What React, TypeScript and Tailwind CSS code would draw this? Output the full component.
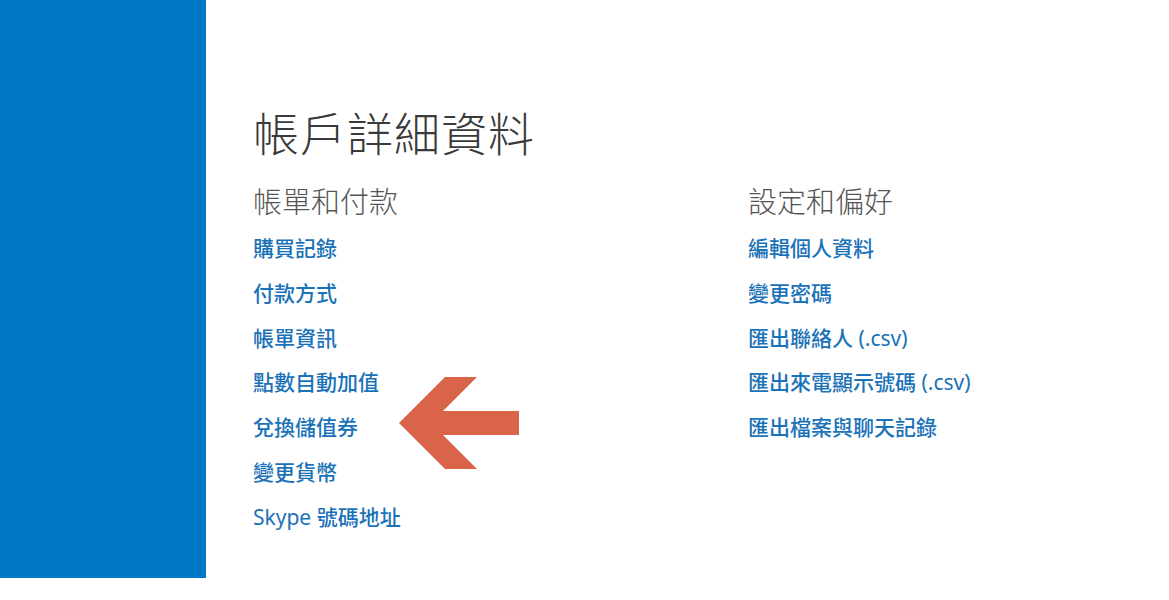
import React from "react";

type Item = { cjk: string; latinBefore?: string; latinAfter?: string };

const left: Item[] = [
  { cjk: "購買記錄" },
  { cjk: "付款方式" },
  { cjk: "帳單資訊" },
  { cjk: "點數自動加值" },
  { cjk: "兌換儲值券" },
  { cjk: "變更貨幣" },
  { latinBefore: "Skype ", cjk: "號碼地址" },
];
const right: Item[] = [
  { cjk: "編輯個人資料" },
  { cjk: "變更密碼" },
  { cjk: "匯出聯絡人", latinAfter: " (.csv)" },
  { cjk: "匯出來電顯示號碼", latinAfter: " (.csv)" },
  { cjk: "匯出檔案與聊天記錄" },
];

const font = { fontFamily: '"Noto Sans", "Noto Sans CJK TC", sans-serif' };

function LinkList({ items }: { items: Item[] }) {
  return (
    <ul className="mt-[4px] flex flex-col">
      {items.map((t) => (
        <li key={t.cjk} className="text-[21px] leading-[44.8px] font-medium text-[#1a72b8]">
          {t.latinBefore && <span className="font-normal">{t.latinBefore}</span>}
          {t.cjk}
          {t.latinAfter && <span className="font-normal">{t.latinAfter}</span>}
        </li>
      ))}
    </ul>
  );
}

export default function App() {
  return (
    <div className="flex w-[1169px] h-[600px] bg-white overflow-hidden" style={font}>
      <aside className="w-[206px] h-[578px] shrink-0 bg-[#0078c8]" />
      <main className="relative flex-1 pl-[47px] pt-[105px]">
        <h1 className="text-[46px] leading-[56px] font-light text-[#3a3a3a] tracking-[1px]">帳戶詳細資料</h1>
        <div className="mt-[21px] grid grid-cols-[495px_1fr]">
          <section>
            <h2 className="text-[29px] leading-[40px] font-light text-[#555555]">帳單和付款</h2>
            <LinkList items={left} />
          </section>
          <section>
            <h2 className="text-[29px] leading-[40px] font-light text-[#555555]">設定和偏好</h2>
            <LinkList items={right} />
          </section>
        </div>
        <svg
          className="absolute left-[192px] top-[376px]"
          width="122"
          height="94"
          viewBox="0 0 122 94"
        >
          <polygon
            points="1,47 47,1 79,1 45,35 121,35 121,59 45,59 79,93 47,93"
            fill="#d9644a"
          />
        </svg>
      </main>
    </div>
  );
}
